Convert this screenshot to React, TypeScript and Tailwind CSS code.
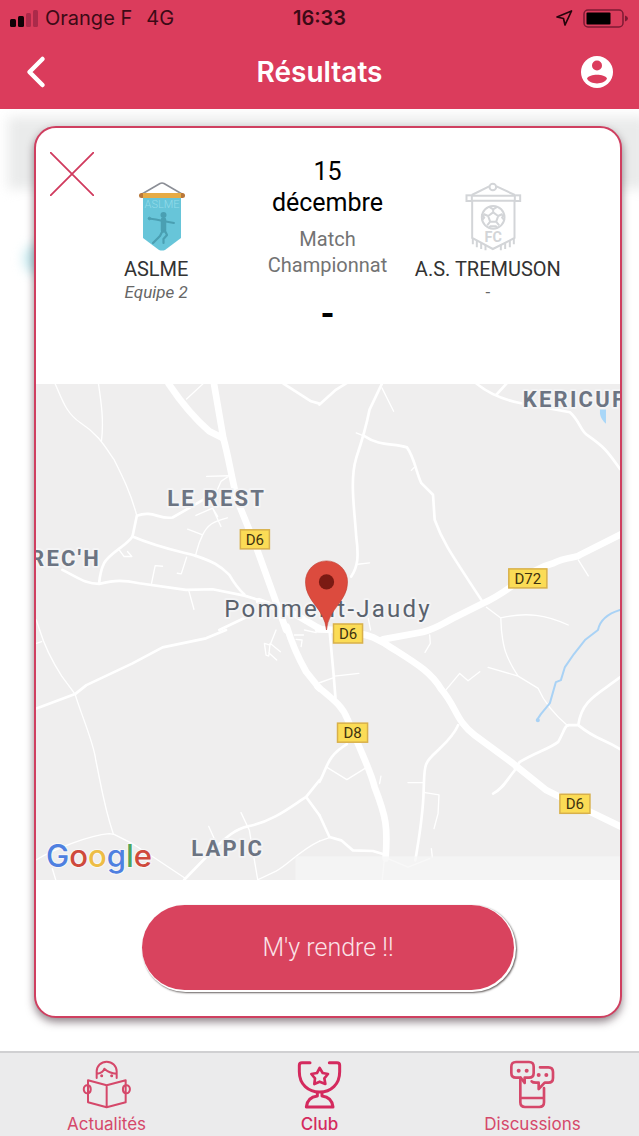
import type { ReactNode } from "react";

const minorRoads = {
  nw: [
    "M168 42C190 90 200 130 245 160C300 195 320 235 345 270C370 320 395 370 413 438",
    "M298 42C305 90 315 150 307 215",
    "M612 42L562 88",
    "M622 320L690 318L665 335L655 358",
    "M590 437L640 415L665 470M640 415L655 440",
    "M684 444C640 455 625 465 610 495C595 525 595 535 588 560M565 478L610 495",
    "M562 562L546 612L534 610",
    "M457 640L468 587L490 589",
    "M568 660L584 718",
    "M360 540L375 560L398 560L385 545",
    "M112 750L122 780",
  ],
  ne: [
    "M187 55L222 125",
    "M110 190L136 200",
    "M275 302L285 292",
    "M115 583L150 579",
    "M775 570L805 618",
    "M500 712L543 744L545 780M543 744C620 725 680 735 745 765",
    "M146 745L153 780",
  ],
  sw: [
    "M122 0C140 60 170 110 188 138L228 192C245 250 285 340 290 390C305 460 315 530 343 612",
    "M112 40L128 35",
    "M112 688C170 655 270 615 330 610L345 612L400 640L470 685L560 745",
    "M830 0L812 45L795 40L800 75L808 78L812 40L843 65M808 68L832 90",
    "M725 547L750 600L775 748L830 722C870 700 900 660 960 632",
    "M628 588L645 625",
    "M160 715L170 748",
    "M885 15L912 15M890 28L908 30L905 50M915 0L950 8",
  ],
  se: [
    "M545 0C550 40 550 70 595 138M505 112L595 138L655 175C670 210 700 250 745 288",
    "M380 178L420 130L445 152L480 125",
    "M45 138L118 130M0 158L45 142",
    "M330 15L332 40L316 67",
    "M20 410L82 448L140 412M180 460L184 438",
    "M265 457L312 457M316 487L358 494L355 550L343 595M335 655L338 680",
    "M205 685L265 710L330 685M0 632L30 622",
    "M195 680L188 748",
  ],
};

const localRoads = {
  nw: [
    "M413 438L400 500M413 438C460 420 480 450 520 443L560 420L620 385",
    "M400 500C380 530 330 550 315 580C305 600 302 620 300 640",
    "M400 500C470 530 520 540 590 558C640 575 660 585 690 615C710 650 720 660 735 674",
    "M190 600C240 625 260 642 300 642C350 630 370 630 420 640L560 660L640 658L735 677L810 700",
    "M660 780L740 742",
    "M852 42L935 95L960 102",
  ],
  ne: [
    "M0 105L50 60L95 32",
    "M187 42L150 120C140 170 125 220 110 265C90 330 105 420 110 500C118 560 115 590 95 620",
    "M136 200C180 230 220 220 262 233C285 265 290 310 305 340L340 375L345 450C370 520 400 560 490 698",
    "M470 42C510 75 550 90 600 100L750 128C780 155 780 180 800 195C850 230 860 240 900 298M530 75L560 42",
  ],
  sw: [
    "M112 235L228 192L262 165L400 100L490 52L620 25L680 0",
    "M555 748L640 660C680 620 710 595 745 588C820 575 880 525 920 500L960 450M920 500L960 555",
  ],
  se: [
    "M415 285C400 320 370 345 350 365C310 400 315 410 312 480C310 560 300 610 287 690",
    "M585 415L600 395C650 365 690 355 715 335C730 310 735 285 745 285L775 285C830 330 850 325 900 357M775 285C785 210 830 195 900 142M520 490C550 475 560 450 585 420",
    "M82 342C20 380 25 410 0 455M0 555L30 620L65 630L100 660L160 662L200 674",
    "M30 0L42 130L48 205",
  ],
};

const mainRoads = {
  nw: [
    "M508 42C540 90 590 150 630 185L670 205",
    "M644 42L672 205C690 270 695 320 715 395L770 530L860 780",
    "M780 694L890 735L950 770L960 775",
  ],
  ne: [
    "M190 808L310 786C350 775 370 760 400 745L490 700C580 660 620 600 700 580C740 560 770 565 780 555L910 490",
  ],
  sw: ["M862 -10C880 50 900 90 920 125L960 175"],
  se: [
    "M-4 -2C80 0 130 10 160 22L195 40C280 95 330 120 365 178C410 230 410 275 465 315L580 400L680 480L760 520L905 590",
    "M-5 170C50 215 70 230 85 270L115 340C140 400 155 430 165 470C200 560 205 590 198 684",
  ],
};

type Roads = { nw: string[]; ne: string[]; sw: string[]; se: string[] };

function RoadLayer({ roads, width }: { roads: Roads; width: number }) {
  const tiles: [string[], string][] = [
    [roads.nw, "translate(-37 -14) scale(0.33333)"],
    [roads.ne, "translate(283 -14) scale(0.33333)"],
    [roads.sw, "translate(-37 246) scale(0.33333)"],
    [roads.se, "translate(283 246) scale(0.33333)"],
  ];
  return (
    <g fill="none" stroke="#fff" strokeWidth={width} strokeLinecap="round" strokeLinejoin="round">
      {tiles.map(([paths, transform]) => (
        <g key={transform} transform={transform}>
          {paths.map((d) => (
            <path key={d} d={d} />
          ))}
        </g>
      ))}
    </g>
  );
}

function Shield({ x, y, w, label }: { x: number; y: number; w: number; label: string }) {
  return (
    <g>
      <rect x={x} y={y} width={w} height="19" fill="#fbdc56" stroke="#d8b04a" strokeWidth="1.5" />
      <text x={x + w / 2} y={y + 15} textAnchor="middle" fill="#3f320f" className="text-[15px]">
        {label}
      </text>
    </g>
  );
}

function MatchMap() {
  return (
    <svg
      role="img"
      aria-label="Pommerit-Jaudy"
      viewBox="0 0 583 496"
      preserveAspectRatio="xMidYMid slice"
      className="block h-[496px] w-full bg-[#efeeee]"
    >
      <RoadLayer roads={minorRoads} width={4} />
      <RoadLayer roads={localRoads} width={8} />
      <RoadLayer roads={mainRoads} width={20} />
      <g fill="none" stroke="#a9d2f5" strokeWidth="2" strokeLinecap="round" strokeLinejoin="round">
        <path d="M583 226C570 230 563 236 561 246L548 256L537 270L528 283L524 296L519 298L513 319L504 330L500 336" />
        <circle cx="501" cy="336" r="1" />
      </g>
      <path d="M563 26h6v14c-3-3-5-5-6-10z" fill="#a9d7f8" />
      <rect x="259" y="472" width="324" height="24" fill="#f6f5f5" opacity="0.75" />

      <g
        fill="#6c7482"
        stroke="#f4f4f5"
        strokeWidth="4"
        strokeLinejoin="round"
        paintOrder="stroke"
        className="text-[22px] font-bold tracking-widest"
      >
        <text x="131" y="122">LE REST</text>
        <text x="486" y="23">KERICUFF</text>
        <text x="65" y="182" textAnchor="end">KERREC'H</text>
        <text x="155" y="472">LAPIC</text>
        <text x="188" y="233" fill="#5a626d" className="text-[24px] font-normal">
          Pommerit-Jaudy
        </text>
      </g>

      <Shield x={204} y={146} w={29} label="D6" />
      <Shield x={472} y={185} w={38} label="D72" />
      <Shield x={297} y={240} w={29} label="D6" />
      <Shield x={301} y={339} w={30} label="D8" />
      <Shield x={523} y={410} w={30} label="D6" />

      <path
        d="M290 246C288 224 269 218 269 198A21 21 0 0 1 311 198C311 218 292 224 290 246Z"
        fill="#dc4b3e"
        stroke="#bf4034"
        strokeWidth="0.6"
      />
      <circle cx="290" cy="198" r="7.6" fill="#7b1a13" />

      <text
        x="10"
        y="483"
        stroke="#f8f8f8"
        strokeWidth="2"
        paintOrder="stroke"
        className="font-['Inter','Liberation_Sans',sans-serif] text-[31px] font-medium"
      >
        <tspan fill="#4f80e0">G</tspan>
        <tspan fill="#cf4a3c">o</tspan>
        <tspan fill="#eebd45">o</tspan>
        <tspan fill="#4f80e0">g</tspan>
        <tspan fill="#4ea65c">l</tspan>
        <tspan fill="#cf4a3c">e</tspan>
      </text>
    </svg>
  );
}

function HomePennant() {
  return (
    <svg viewBox="0 0 48 70" className="h-[70px] w-12" aria-hidden="true">
      <path d="M4 12L22 1.5q2-1 4 0L44 12" fill="none" stroke="#8b8e96" strokeWidth="1.6" />
      <path d="M5 14h38v42L27 68q-3 1-6 0L5 56z" fill="#67c5d9" />
      <rect x="1" y="11" width="46" height="5" rx="2.5" fill="#b9783a" />
      <rect x="5" y="11" width="38" height="5" fill="#e6ab45" />
      <text x="24" y="26" textAnchor="middle" fill="#94dcea" className="text-[11px] font-light">
        ASLME
      </text>
      <g fill="none" stroke="#4a9fb2" strokeLinecap="round" strokeLinejoin="round">
        <circle cx="25.500" cy="33" r="3" fill="#4a9fb2" stroke="none" />
        <path d="M11 36.500L18 37.500L25 39L36 41" strokeWidth="1.800" />
        <path d="M25.500 38V48" strokeWidth="5.500" />
        <path d="M24.500 49L22 54L15 61M27 49L29 53L25.500 57V61" strokeWidth="2.200" />
        <circle cx="11.500" cy="36.500" r="1.300" />
      </g>
    </svg>
  );
}

function AwayPennant() {
  return (
    <svg viewBox="436 215 170 210" className="h-[70px] w-[57px]" fill="none" stroke="#d3d5d8" strokeWidth="6" aria-hidden="true">
      <circle cx="519" cy="230" r="10" />
      <path d="M456 254L508 228M530 228L585 254" />
      <rect x="440" y="255" width="16" height="17" />
      <rect x="585" y="255" width="16" height="17" />
      <path d="M456 256H585M456 271H585" />
      <path d="M457 272V383L519 416L584 383V272" />
      <path d="M459 383V402M471 390V411M484 397V416M497 404V420M543 404V420M556 397V416M570 390V411M582 383V402" />
      <circle cx="520" cy="321" r="34" />
      <path d="M520 306L535 317L529 334H511L505 317ZM520 306V296M535 317L548 311M529 334L538 345M511 334L502 345M505 317L491 311M507 289L520 297L533 289M553 311L547 322L554 330M486 311L493 322L486 330M506 353L512 348H528L534 353" />
      <text x="520" y="395" textAnchor="middle" fill="#d3d5d8" stroke="none" className="text-[43px] font-bold">
        FC
      </text>
    </svg>
  );
}

function ReaderIcon() {
  return (
    <svg viewBox="246 60 147 147" className="size-[49px]" fill="none" stroke="currentColor" strokeWidth="6" strokeLinecap="round" strokeLinejoin="round" aria-hidden="true">
      <path d="M290 114V94A30 29 0 0 1 350 94V114M291 101C303 99 311 93 313 86C322 94 335 100 349 101" />
      <path d="M320 136L264 121V187L320 202L377 187V121ZM320 136V202" />
      <path d="M264 136C248 132 246 162 264 160C275 158 275 138 264 136M377 136C393 132 395 162 377 160C366 158 366 138 377 136" />
      <g fill="currentColor" stroke="none">
        <circle cx="305" cy="107" r="4.500" />
        <circle cx="335" cy="107" r="4.500" />
      </g>
    </svg>
  );
}

function TrophyIcon() {
  return (
    <svg viewBox="0 0 147 147" className="size-[49px]" fill="none" stroke="currentColor" strokeWidth="9" strokeLinecap="round" strokeLinejoin="round" aria-hidden="true">
      <path d="M45 8H21Q13 8 13 16V35C13 73 40 96 74 96S134 73 134 35V16Q134 8 126 8H103" />
      <path d="M74 24L83 39L99 42L88 55L91 72L74 65L58 72L60 55L49 42L66 39Z" strokeWidth="8" />
      <path d="M67 98V108C48 110 36 122 34 141H114C112 122 100 110 81 108V98" />
    </svg>
  );
}

function ChatPhoneIcon() {
  return (
    <svg viewBox="562 60 147 147" className="size-[49px]" fill="none" stroke="currentColor" strokeWidth="8" strokeLinecap="round" strokeLinejoin="round" aria-hidden="true">
      <path d="M600 113H586Q572 113 572 99V80Q572 66 586 66H625Q639 66 639 80V99Q639 113 625 113H612V129L600 113" />
      <path d="M658 82H683Q697 82 697 96V114Q697 128 683 128H672L654 147V128H646Q636 128 633 124" />
      <path d="M599 118V187Q599 201 613 201H656Q670 201 670 187V144M599 174H670" />
      <g fill="currentColor" stroke="none">
        <circle cx="594" cy="92" r="6" />
        <circle cx="618" cy="92" r="6" />
        <circle cx="654" cy="105" r="6" />
        <circle cx="677" cy="105" r="6" />
      </g>
    </svg>
  );
}

function Tab({ icon, label, active = false }: { icon: ReactNode; label: string; active?: boolean }) {
  return (
    <a
      href="#"
      aria-current={active ? "page" : undefined}
      className={
        active
          ? "flex flex-1 flex-col items-center gap-1 font-medium text-[#d42a5e]"
          : "flex flex-1 flex-col items-center gap-1 text-[#d5486a]"
      }
    >
      {icon}
      <span className="text-[17px] leading-[22px]">{label}</span>
    </a>
  );
}

export default function App() {
  return (
    <div className="flex min-h-screen flex-col bg-white font-['Roboto','Liberation_Sans',sans-serif]">
      <header className="bg-[#db3c5c] font-['Inter','Liberation_Sans',sans-serif]">
        <div className="grid h-9 grid-cols-3 items-center px-[10px] text-[20px] text-[#3c0a16]">
          <div className="flex items-center gap-[6px] whitespace-nowrap">
            <svg viewBox="0 0 29 17" className="h-[17px] w-[29px]" aria-hidden="true">
              <rect x="0" y="9" width="6" height="8" rx="1.500" fill="#100206" />
              <rect x="8" y="6" width="6" height="11" rx="1.500" fill="#100206" />
              <rect x="16" y="3" width="5" height="14" rx="1.500" fill="#ab2a4a" />
              <rect x="23" y="0" width="5" height="17" rx="1.500" fill="#ab2a4a" />
            </svg>
            <span>Orange F</span>
            <span className="ml-2">4G</span>
          </div>
          <span className="text-center font-semibold">16:33</span>
          <div className="flex items-center justify-end gap-[10px]">
            <svg viewBox="0 0 17 17" className="size-[17px]" fill="none" stroke="#26040c" strokeWidth="1.700" strokeLinejoin="round" aria-hidden="true">
              <path d="M1 7L15.500 1L9 15L7.500 8.500Z" />
            </svg>
            <svg viewBox="0 0 46 19" className="h-[19px] w-[46px]" aria-hidden="true">
              <rect x="1" y="1" width="39" height="17" rx="4" fill="none" stroke="#7d1a33" strokeWidth="1.500" />
              <rect x="3.500" y="3.500" width="24" height="12" rx="1" fill="#000" />
              <path d="M42 6.500q3 1 3 3t-3 3z" fill="#7d1a33" />
            </svg>
          </div>
        </div>
        <div className="grid h-[73px] grid-cols-3 items-center px-[22px] pb-[2px]">
          <button type="button" aria-label="Retour" className="w-7 justify-self-start">
            <svg viewBox="0 0 28 34" className="h-[34px] w-7" fill="none" stroke="#fff" strokeWidth="4.500" strokeLinecap="round" strokeLinejoin="round" aria-hidden="true">
              <path d="M20.500 4L7.500 17L20.500 30" />
            </svg>
          </button>
          <h1 className="text-center text-[28px] font-semibold text-white">Résultats</h1>
          <button type="button" aria-label="Profil" className="justify-self-end">
            <svg viewBox="0 0 34 34" className="mr-1 size-[34px]" aria-hidden="true">
              <circle cx="18" cy="17" r="16" fill="#fff" />
              <circle cx="18" cy="10.500" r="5" fill="#db3c5c" />
              <path d="M8 23.500C10.500 18.500 25.500 18.500 28 23.500C25 30 11 30 8 23.500Z" fill="#db3c5c" />
            </svg>
          </button>
        </div>
      </header>

      <main className="relative flex-1 overflow-hidden pt-[17px] pr-[17px] pb-8 pl-[34px]">
        <div className="absolute -right-2 left-2 top-2 h-[72px] bg-[#eaebeb] blur-[6px]" />
        <div className="absolute top-[134px] left-6 h-8 w-8 rounded-full bg-[#bfe6ec] blur-[6px]" />

        <section className="relative overflow-hidden rounded-[22px] border-2 border-[#cf3f60] bg-white shadow-[0_4px_8px_rgba(70,50,60,0.6)]">
          <button type="button" aria-label="Fermer" className="absolute top-6 left-[14px]">
            <svg viewBox="0 0 44 44" className="size-11" fill="none" stroke="#d03a5e" strokeWidth="1.800" aria-hidden="true">
              <path d="M0 0L44 44M44 0L0 44" />
            </svg>
          </button>

          <div className="grid h-[256px] grid-cols-[170fr_172fr_148fr] pr-[58px] pl-[35px] text-center text-[#333]">
            <div className="flex flex-col items-center pt-[54px]">
              <div className="pl-3">
                <HomePennant />
              </div>
              <h2 className="mt-1 text-[20px] leading-[26px]">ASLME</h2>
              <p className="text-[17px] leading-5 text-[#666] italic">Equipe 2</p>
            </div>
            <div className="pt-7">
              <p className="text-[25px] leading-[31px] text-black">
                15
                <br />
                décembre
              </p>
              <p className="mt-2 text-[20px] leading-[26px] text-[#737373]">
                Match
                <br />
                Championnat
              </p>
              <p className="mt-4 text-[36px] leading-10 font-bold text-black">-</p>
            </div>
            <div className="flex flex-col items-center pt-[54px]">
              <div className="pl-3">
                <AwayPennant />
              </div>
              <h2 className="mt-1 text-[20px] leading-[26px] whitespace-nowrap">A.S. TREMUSON</h2>
              <p className="text-[17px] leading-5 text-[#666]">-</p>
            </div>
          </div>

          <MatchMap />

          <div className="flex justify-center pt-[25px] pb-[26px]">
            <button
              type="button"
              className="h-[85px] w-[372px] max-w-full rounded-full bg-[#d9435e] text-[25px] font-light text-[#fbe3e8] shadow-[1px_1px_0_1px_#fff,2px_2px_2px_1px_#66605f]"
            >
              M'y rendre !!
            </button>
          </div>
        </section>
      </main>

      <nav className="flex h-[85px] border-t-2 border-[#d0d0d2] bg-[#ebebec] pt-[7px] font-['Inter','Liberation_Sans',sans-serif]">
        <Tab icon={<ReaderIcon />} label="Actualités" />
        <Tab icon={<TrophyIcon />} label="Club" active />
        <Tab icon={<ChatPhoneIcon />} label="Discussions" />
      </nav>
    </div>
  );
}
